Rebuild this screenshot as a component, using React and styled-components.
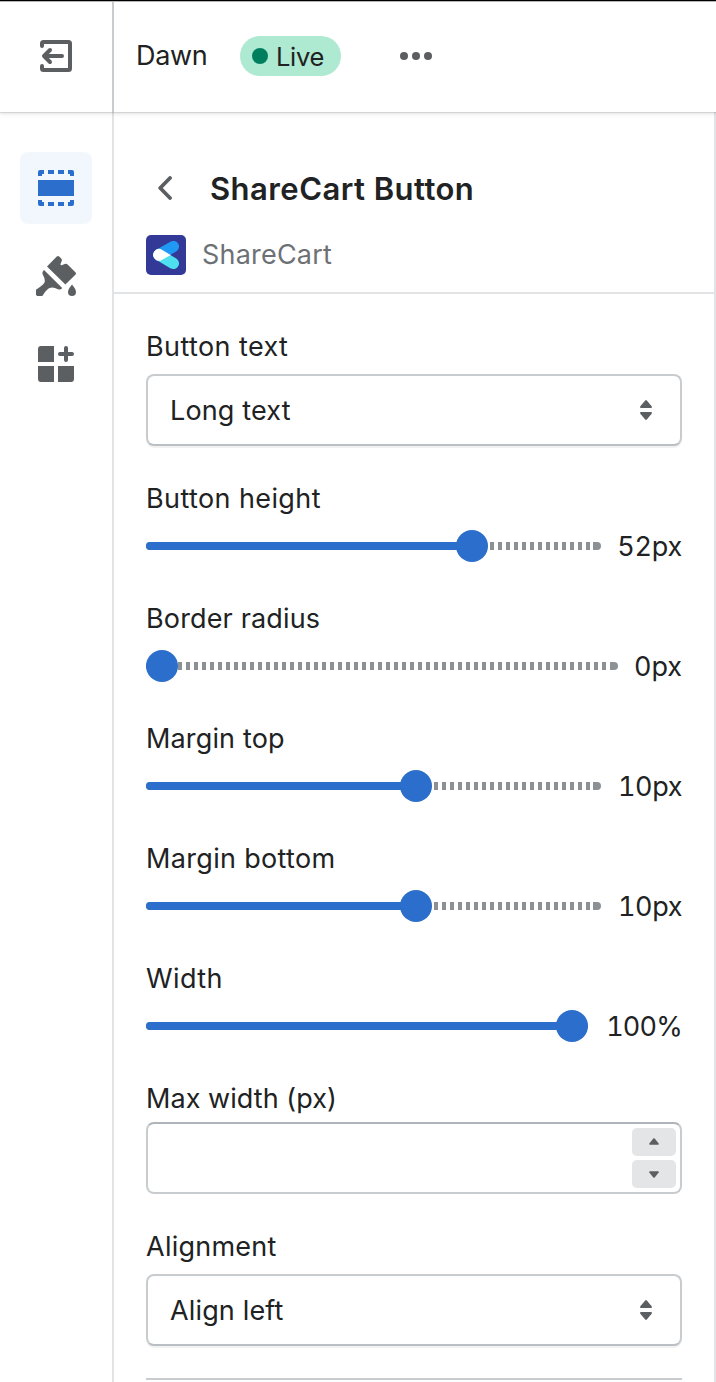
import React from "react";
import styled, { createGlobalStyle } from "styled-components";

const ranges = [
  { label: "Button height", spacing: 0.4, value: 52, min: 30, max: 60, unit: "px", width: 65, valueSpacing: -0.25 },
  { label: "Border radius", spacing: 0.15, value: 0, min: 0, max: 50, unit: "px", width: 48, valueSpacing: -0.1 },
  { label: "Margin top", spacing: 0.15, value: 10, min: -20, max: 30, unit: "px", width: 65, valueSpacing: -0.4 },
  { label: "Margin bottom", spacing: 0.33, value: 10, min: -20, max: 30, unit: "px", width: 65, valueSpacing: -0.4 },
  { label: "Width", spacing: 0.4, value: 100, min: 10, max: 100, unit: "%", width: 78, valueSpacing: -0.8 },
];

const ExitIcon = () => (
  <svg width="32" height="32" viewBox="0 0 32 32" fill="none" stroke="#5c5f62" strokeWidth="4" strokeLinecap="round" strokeLinejoin="round">
    <path d="M2 6V3.5A1.5 1.5 0 0 1 3.5 2H28.5A1.5 1.5 0 0 1 30 3.5V28.5A1.5 1.5 0 0 1 28.5 30H3.5A1.5 1.5 0 0 1 2 28.5V26" />
    <path d="M22 16H5M10 10L4 16L10 22" />
  </svg>
);

const DotsIcon = () => (
  <svg width="32" height="8" viewBox="0 0 32 8" fill="#5c5f62">
    <circle cx="4" cy="4" r="4" />
    <circle cx="16" cy="4" r="4" />
    <circle cx="28" cy="4" r="4" />
  </svg>
);

const SectionsIcon = () => (
  <svg width="36" height="36" viewBox="0 0 36 36" fill="#2c6ecb">
    <path d="M0 10h36v16H0zM10 0h6v4h-6zM20 0h6v4h-6zM10 32h6v4h-6zM20 32h6v4h-6z" />
    <path d="M2 0h4v4H4v2H0V2a2 2 0 0 1 2-2zM30 0h4a2 2 0 0 1 2 2v4h-4V4h-2zM0 30h4v2h2v4H2a2 2 0 0 1-2-2zM32 30h4v4a2 2 0 0 1-2 2h-4v-4h2z" />
  </svg>
);

const BrushIcon = () => (
  <svg width="40" height="40" viewBox="0 0 40 40" fill="#5c5f62">
    <path d="M20.8 0.6Q22 -0.5 23.2 0.6L25 2.3Q26.4 3.7 25.6 5.2L24.6 7.8Q24.3 9.8 26.2 9L28.8 7.9Q30.4 7.4 31.6 8.6L39.6 16.6Q40.4 17.6 39.6 18.5L29.4 28.6L11 10.6Z" />
    <path d="M8 14L26.2 32Q24.8 34.4 22 33.2Q17.4 30.8 13.5 32Q11.2 32.9 7.8 37.8A4.4 4.4 0 1 1 2.2 32.2Q7.4 28.9 8.5 26.6Q9.6 23.5 7 19Q5.4 16.3 8 14Z" />
    <path d="M36 28.5C37.6 30.5 40 33.5 40 36A4 4 0 0 1 32 36C32 33.5 34.4 30.5 36 28.5Z" />
  </svg>
);

const AppsIcon = () => (
  <svg width="36" height="36" viewBox="0 0 36 36" fill="#5c5f62">
    <path d="M3 0H16V16H0V3A3 3 0 0 1 3 0ZM0 20H16V36H3A3 3 0 0 1 0 33ZM20 20H36V33A3 3 0 0 1 33 36H20Z" />
    <path d="M28 2V14M22 8H34" stroke="#5c5f62" strokeWidth="4" strokeLinecap="round" />
  </svg>
);

const BackIcon = () => (
  <svg width="14" height="24" viewBox="0 0 14 24" fill="none" stroke="#5c5f62" strokeWidth="3.8" strokeLinecap="round" strokeLinejoin="round">
    <path d="M12 2L2.2 12L12 22" />
  </svg>
);

const ShareCartLogo = () => (
  <svg width="40" height="40" viewBox="0 0 40 40">
    <rect width="40" height="40" rx="5" fill="#333996" />
    <g fill="none" strokeWidth="11.4" strokeLinecap="round">
      <path d="M13 19.8L27.3 11.6" stroke="#2099f5" />
      <path d="M13 19.8L27.3 28.4" stroke="#4fe0ef" />
    </g>
    <path d="M24.7 19.9L16.2 24.7A5.8 5.8 0 1 1 16.2 15Z" fill="#fff" />
  </svg>
);

const SelectIcon = () => (
  <svg width="12" height="20" viewBox="0 0 12 20" fill="#5c5f62">
    <path d="M5.2 0.5Q6 -0.4 6.8 0.5L11.7 6.3Q12.4 8 11 8H1Q-0.4 8 0.3 6.3ZM5.2 19.5Q6 20.4 6.8 19.5L11.7 13.7Q12.4 12 11 12H1Q-0.4 12 0.3 13.7Z" />
  </svg>
);

const StepIcon = ({ down }) => (
  <svg width="10" height="8" viewBox="0 0 10 8" fill="#5c5f62">
    <path
      d={
        down
          ? "M4.3 7.5Q5 8.1 5.7 7.5L9.7 2.6Q10.2 1.2 9 1.2H1Q-0.2 1.2 0.3 2.6Z"
          : "M4.3 0.5Q5 -0.1 5.7 0.5L9.7 5.4Q10.2 6.8 9 6.8H1Q-0.2 6.8 0.3 5.4Z"
      }
    />
  </svg>
);

const Select = ({ label, spacing, value }) => (
  <Field $height={152}>
    <Label $spacing={spacing}>{label}</Label>
    <SelectBox type="button">
      <span>{value}</span>
      <SelectIcon />
    </SelectBox>
  </Field>
);

const Range = ({ label, spacing, value, min, max, unit, width, valueSpacing }) => {
  const percent = (value - min) / (max - min);
  const left = `calc((100% - 32px) * ${percent})`;

  return (
    <Field $height={120}>
      <Label $spacing={spacing}>{label}</Label>
      <RangeRow>
        <Track>
          <Fill style={{ width: `calc(${left} + 16px)` }} />
          <Thumb style={{ left }} />
        </Track>
        <Output $width={width} $spacing={valueSpacing}>
          {value}
          {unit}
        </Output>
      </RangeRow>
    </Field>
  );
};

const App = () => {
  return (
    <Page>
      <GlobalStyle />
      <TopBar>
        <ExitLink>
          <ExitIcon />
        </ExitLink>
        <ThemeName>Dawn</ThemeName>
        <Badge>
          <BadgeDot />
          Live
        </Badge>
        <DotsIcon />
      </TopBar>
      <Body>
        <Nav>
          <NavItem $active>
            <SectionsIcon />
          </NavItem>
          <NavItem>
            <BrushIcon />
          </NavItem>
          <NavItem>
            <AppsIcon />
          </NavItem>
        </Nav>
        <Panel>
          <PanelHeader>
            <TitleRow>
              <BackIcon />
              <Title>ShareCart Button</Title>
            </TitleRow>
            <AppRow>
              <ShareCartLogo />
              <span>ShareCart</span>
            </AppRow>
          </PanelHeader>
          <Settings>
            <Select label="Button text" spacing={0.4} value="Long text" />
            {ranges.map((item) => (
              <Range key={item.label} {...item} />
            ))}
            <Field $height={148}>
              <Label $spacing={0.05} $tight>
                Max width (px)
              </Label>
              <NumberBox>
                <NumberInput aria-label="Max width (px)" />
                <Stepper>
                  <StepButton type="button">
                    <StepIcon />
                  </StepButton>
                  <StepButton type="button">
                    <StepIcon down />
                  </StepButton>
                </Stepper>
              </NumberBox>
            </Field>
            <Select label="Alignment" spacing={0.25} value="Align left" />
            <Divider />
          </Settings>
        </Panel>
      </Body>
    </Page>
  );
};

const GlobalStyle = createGlobalStyle`
  * {
    box-sizing: border-box;
  }
  body {
    margin: 0;
    background: #fff;
    color: #202223;
    font-family: Inter, "Liberation Sans", sans-serif;
    font-size: 27px;
    line-height: 40px;
  }
  svg {
    display: block;
    flex-shrink: 0;
  }
  button,
  input {
    font: inherit;
    color: inherit;
  }
`;

const Page = styled.div`
  display: flex;
  flex-direction: column;
  height: 1382px;
  overflow: hidden;
`;

const TopBar = styled.header`
  display: flex;
  align-items: center;
  flex-shrink: 0;
  height: 112px;
  position: relative;
  z-index: 1;
  background: #fff;
  box-shadow: inset 0 1px 0 #000, inset 0 2px 0 #b5b5b5,
    0 1px 1px rgba(0, 0, 0, 0.1), 0 2px 4px rgba(0, 0, 0, 0.1);
`;

const ExitLink = styled.div`
  display: flex;
  align-items: center;
  width: 114px;
  height: 110px;
  margin-top: 2px;
  padding: 0 0 2px 40px;
  border-right: 2px solid #c9cccf;
`;

const ThemeName = styled.span`
  width: 104px;
  margin-left: 22px;
  letter-spacing: -0.3px;
`;

const Badge = styled.span`
  display: flex;
  align-items: center;
  gap: 8px;
  width: 101px;
  height: 40px;
  margin-right: 59px;
  padding: 1px 0 0 12px;
  border-radius: 20px;
  background: #aee9d1;
  font-size: 25.5px;
  letter-spacing: -0.3px;
`;

const BadgeDot = styled.span`
  width: 16px;
  height: 16px;
  margin-top: -1px;
  border-radius: 50%;
  background: #007f5f;
`;

const Body = styled.div`
  display: flex;
  flex: 1;
`;

const Nav = styled.nav`
  display: flex;
  flex-direction: column;
  gap: 16px;
  width: 114px;
  padding: 40px 20px;
  border-right: 2px solid #e1e3e5;
`;

const NavItem = styled.div`
  display: flex;
  align-items: center;
  justify-content: center;
  width: 72px;
  height: 72px;
  border-radius: 8px;
  background: ${({ $active }) => ($active ? "#f2f7fe" : "transparent")};
`;

const Panel = styled.main`
  flex: 1;
  border-right: 2px solid #e1e3e5;
`;

const PanelHeader = styled.div`
  height: 182px;
  padding: 56px 32px 0;
  border-bottom: 2px solid #e1e3e5;
`;

const TitleRow = styled.div`
  display: flex;
  align-items: center;
  gap: 38px;
  height: 40px;
  padding-left: 12px;
`;

const Title = styled.h1`
  margin: 0;
  padding-top: 2px;
  font-size: 31px;
  font-weight: 600;
  line-height: 40px;
  letter-spacing: 0.45px;
`;

const AppRow = styled.div`
  display: flex;
  align-items: center;
  gap: 16px;
  margin-top: 27px;
  color: #6d7175;
  letter-spacing: 0.2px;
`;

const Settings = styled.div`
  padding: 32px 32px 0;
`;

const Field = styled.div`
  height: ${({ $height }) => $height}px;
`;

const Label = styled.div`
  height: ${({ $tight }) => ($tight ? 44 : 48)}px;
  padding-top: 1px;
  letter-spacing: ${({ $spacing }) => $spacing}px;
`;

const SelectBox = styled.button`
  display: flex;
  align-items: center;
  justify-content: space-between;
  width: 100%;
  height: 72px;
  padding: 0 28px 0 22px;
  border: 2px solid #c9cccf;
  border-bottom-color: #babfc3;
  border-radius: 8px;
  background: #fff;
  box-shadow: 0 2px 0 rgba(0, 0, 0, 0.05);
  letter-spacing: 0.15px;

  span {
    padding-top: 2px;
  }
`;

const RangeRow = styled.div`
  display: flex;
  align-items: center;
  gap: 16px;
  height: 40px;
`;

const Track = styled.div`
  position: relative;
  flex: 1;
  height: 8px;
  border-radius: 4px;
  background: linear-gradient(#8c9196, #8c9196) right / 8px 8px no-repeat,
    repeating-linear-gradient(90deg, #8c9196 0 4px, #fff 4px 8px);
`;

const Fill = styled.div`
  height: 8px;
  border-radius: 4px;
  background: #2c6ecb;
`;

const Thumb = styled.div`
  position: absolute;
  top: -12px;
  width: 32px;
  height: 32px;
  border-radius: 50%;
  background: #2c6ecb;
`;

const Output = styled.output`
  display: flex;
  justify-content: flex-end;
  width: ${({ $width }) => $width}px;
  padding-top: 2px;
  font-variant-numeric: tabular-nums;
  letter-spacing: ${({ $spacing }) => $spacing}px;
`;

const NumberBox = styled.div`
  display: flex;
  height: 72px;
  padding: 4px;
  border: 2px solid #c9cccf;
  border-top-color: #aeb4b9;
  border-radius: 8px;
`;

const NumberInput = styled.input`
  flex: 1;
  min-width: 0;
  padding: 0 18px;
  border: 0;
  outline: 0;
  background: transparent;
`;

const Stepper = styled.div`
  display: flex;
  flex-direction: column;
  gap: 4px;
`;

const StepButton = styled.button`
  display: flex;
  align-items: center;
  justify-content: center;
  width: 44px;
  height: 28px;
  padding: 0;
  border: 0;
  border-radius: 5px;
  background: #e4e5e7;
`;

const Divider = styled.hr`
  margin: 0;
  border: 0;
  border-top: 2px solid #c9cccf;
`;

export default App;
